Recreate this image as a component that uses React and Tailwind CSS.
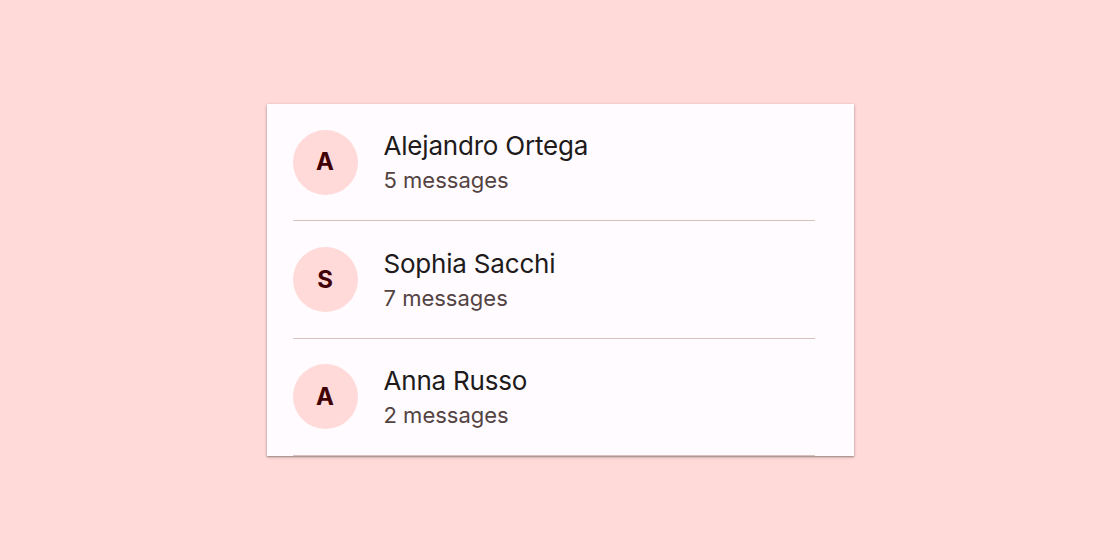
const people = [
  { initial: 'A', name: 'Alejandro Ortega', count: 5 },
  { initial: 'S', name: 'Sophia Sacchi', count: 7 },
  { initial: 'A', name: 'Anna Russo', count: 2 },
];

function PersonRow({ person }) {
  return (
    <div className="pl-[26px] pr-[39px]">
      <div className="flex items-center h-[117.4px] border-b border-[#d8c2c0]">
        {/* Avatar */}
        <div className="w-[65px] h-[65px] shrink-0 rounded-full bg-[#ffdad9] flex items-center justify-center text-[24px] font-bold text-[#410005]">
          {person.initial}
        </div>
        <div className="ml-[26px] flex flex-col">
          <p className="text-[26px] leading-[32px] text-[#201a1a] tracking-[-0.2px]">{person.name}</p>
          <p className="text-[22px] leading-[28px] text-[#534342] mt-[4px]">{person.count} messages</p>
        </div>
      </div>
    </div>
  );
}

export default function App() {
  return (
    <div className="w-[1120px] h-[560px] bg-[#ffdad9] flex items-start justify-center pt-[104px]" style={{ fontFamily: 'Inter, Roboto, sans-serif' }}>
      <div className="w-[587px] bg-[#fffbff] shadow-[0_1px_3px_rgba(0,0,0,0.3),0_1px_1px_rgba(0,0,0,0.15)] flex flex-col">
        {people.map((p, i) => (
          <PersonRow key={i} person={p} />
        ))}
      </div>
    </div>
  );
}
